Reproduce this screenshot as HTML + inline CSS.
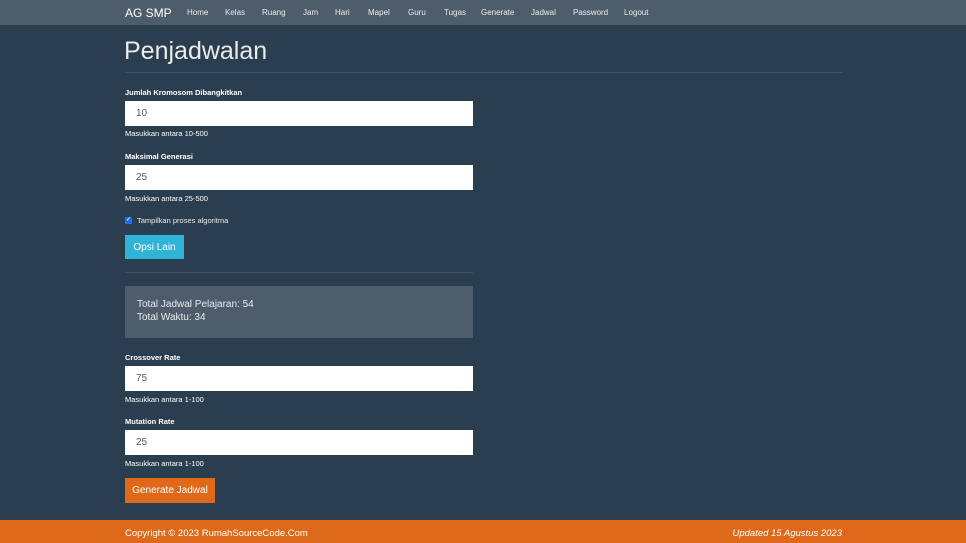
<!DOCTYPE html><html><head><style>
body{margin:0;background:#2b3e50;font-family:"Liberation Sans",sans-serif;color:#ebebeb;width:966px;height:543px;position:relative;overflow:hidden}
.a{position:absolute}
.nav{left:0;top:0;width:966px;height:25px;background:#4e5d6c}
.nav span{position:absolute;top:8px;font-size:8px;color:#ebebeb}
.lbl{left:125px;font-size:7.5px;font-weight:bold;color:#fff}
.help{left:125px;font-size:7.5px;color:#fff}
.inp{left:125px;width:348px;height:25px;background:#fff;font-size:10px;color:#555;line-height:25px;box-sizing:border-box;padding-left:11px}
.btn{display:flex;align-items:center;justify-content:center;color:#fff;font-size:10px}
</style></head><body>
<div class="a nav">
<span style="left:125px;top:6px;font-size:12px;color:#fff">AG SMP</span>
<span style="left:187px">Home</span><span style="left:225px">Kelas</span><span style="left:262px">Ruang</span><span style="left:303px">Jam</span><span style="left:335px">Hari</span><span style="left:368px">Mapel</span><span style="left:408px">Guru</span><span style="left:444px">Tugas</span><span style="left:481px">Generate</span><span style="left:531px">Jadwal</span><span style="left:573px">Password</span><span style="left:624px">Logout</span>
</div>
<div class="a" style="left:124px;top:37px;font-size:25px;color:#ebebeb">Penjadwalan</div>
<div class="a" style="left:125px;top:72px;width:717px;height:1px;background:#3e5165"></div>
<div class="a lbl" style="top:88px">Jumlah Kromosom Dibangkitkan</div>
<div class="a inp" style="top:101px">10</div>
<div class="a help" style="top:129px">Masukkan antara 10-500</div>
<div class="a lbl" style="top:152px">Maksimal Generasi</div>
<div class="a inp" style="top:165px">25</div>
<div class="a help" style="top:194px">Masukkan antara 25-500</div>
<div class="a" style="left:125px;top:217px;width:7px;height:7px;background:#1a73e8;border-radius:1px;color:#fff;font-size:6px;line-height:7px;text-align:center">✓</div>
<div class="a" style="left:137px;top:216px;font-size:7.5px">Tampilkan proses algoritma</div>
<div class="a btn" style="left:125px;top:235px;width:59px;height:24px;background:#2fb4d8">Opsi Lain</div>
<div class="a" style="left:125px;top:272px;width:348px;height:1px;background:#3e5165"></div>
<div class="a" style="left:125px;top:286px;width:348px;height:52px;background:#4e5d6c;font-size:10px;line-height:13px;box-sizing:border-box;padding:12px 12px">Total Jadwal Pelajaran: 54<br>Total Waktu: 34</div>
<div class="a lbl" style="top:353px">Crossover Rate</div>
<div class="a inp" style="top:366px">75</div>
<div class="a help" style="top:395px">Masukkan antara 1-100</div>
<div class="a lbl" style="top:417px">Mutation Rate</div>
<div class="a inp" style="top:430px">25</div>
<div class="a help" style="top:459px">Masukkan antara 1-100</div>
<div class="a btn" style="left:125px;top:478px;width:90px;height:25px;background:#df691a">Generate Jadwal</div>
<div class="a" style="left:0;top:520px;width:966px;height:23px;background:#df691a"></div>
<div class="a" style="left:125px;top:528px;font-size:9.5px;color:#fff">Copyright © 2023 RumahSourceCode.Com</div>
<div class="a" style="right:124px;top:528px;font-size:9.5px;color:#fff;font-style:italic">Updated 15 Agustus 2023</div>
</body></html>
